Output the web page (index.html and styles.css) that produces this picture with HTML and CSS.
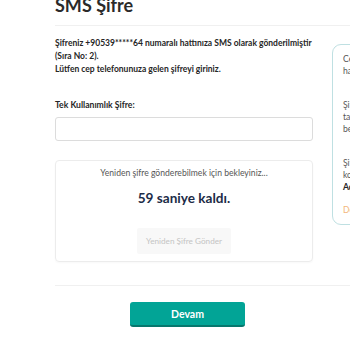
FILE: index.html
```html
<!DOCTYPE html>
<html lang="tr">
<head>
<meta charset="utf-8">
<link rel="stylesheet" href="styles.css">
</head>
<body>
<div class="page">
  <header class="head">
    <h1 class="title">SMS Şifre</h1>
  </header>
  <div class="row">
    <main class="main">
      <p class="info">Şifreniz +90539*****64 numaralı hattınıza SMS olarak gönderilmiştir (Sıra No: 2).<br>Lütfen cep telefonunuza gelen şifreyi giriniz.</p>
      <label class="label" for="otp">Tek Kullanımlık Şifre:</label>
      <input class="input" id="otp" type="text">
      <section class="card">
        <p class="wait">Yeniden şifre gönderebilmek için bekleyiniz...</p>
        <p class="count">59 saniye kaldı.</p>
        <button class="resend" disabled>Yeniden Şifre Gönder</button>
      </section>
    </main>
    <aside class="aside">
      <p class="note">Cep telefonunuza SMS gelmediyse<br>hattınızı kontrol ediniz.</p>
      <p class="note">Şifrenizi yeniden almak için<br>talep süresinin dolmasını<br>bekleyiniz.</p>
      <p class="note">Şifre ile ilgili sorunlarda<br>kontak merkezimize ulaşabilirsiniz.<br><b>Açık 7/24</b></p>
      <p class="more">Detaylı bilgi</p>
    </aside>
  </div>
  <footer class="foot">
    <button class="go">Devam</button>
  </footer>
</div>
</body>
</html>
```
FILE: styles.css
```css
* { box-sizing: border-box; }
html, body { margin: 0; padding: 0; background: #fff; overflow: hidden; }
body { font-family: Lato, "Open Sans", sans-serif; color: #333; }
.page { padding-left: 55px; width: 600px; }
.head { display: flow-root; border-bottom: 1px solid #f0f0f0; height: 26px; }
.title { margin: -6px 0 0; font-size: 18px; line-height: 22px; font-weight: 700; color: #2a2a2a; }
.row { display: flex; gap: 19px; align-items: flex-start; }
.main { width: 258px; flex: none; padding-top: 10.5px; }
.info { margin: 0; font-size: 8.5px; line-height: 13px; font-weight: 700; color: #262626; }
.label { display: block; margin-top: 23px; font-size: 8.6px; line-height: 13px; font-weight: 700; color: #262626; }
.input { display: block; width: 258px; height: 24px; margin: 5.5px 0 0; border: 1px solid #dcdcdc; border-radius: 3px; background: #fff; }
.card { margin-top: 19px; border: 1px solid #ececec; border-radius: 4px; text-align: center; padding: 6px 0 7px; box-shadow: 0 1px 2px rgba(0,0,0,0.03); }
.wait { margin: 0; font-size: 8.6px; line-height: 13px; color: #555; }
.count { margin: 10px 0 0; font-size: 13.6px; line-height: 16px; font-weight: 700; color: #1d2c47; }
.resend { display: block; margin: 22px auto 0; width: 94px; height: 26px; padding: 0; border: none; background: #f8f8f8; color: #c4c4c4; font-family: inherit; font-size: 8.2px; border-radius: 2px; }
.aside { width: 200px; flex: none; margin-top: 18px; border: 1px solid #bfe0e2; border-radius: 9px; padding: 8px 10px 8px; height: 181px; }
.note { margin: 0 0 22px; font-size: 8.6px; line-height: 12px; color: #555; white-space: nowrap; }
.note b { color: #262626; }
.more { margin: -11px 0 0; font-size: 8.6px; line-height: 12px; color: #f3b77c; }
.foot { margin-top: 23px; border-top: 1px solid #f0f0f0; padding-top: 16px; width: 295px; }
.go { display: block; margin-left: 75px; width: 115px; height: 25px; padding: 0; border: none; border-bottom: 2px solid #06776d; border-radius: 3px; background: #02a496; color: #fff; font-family: inherit; font-size: 10.5px; font-weight: 700; }
```
